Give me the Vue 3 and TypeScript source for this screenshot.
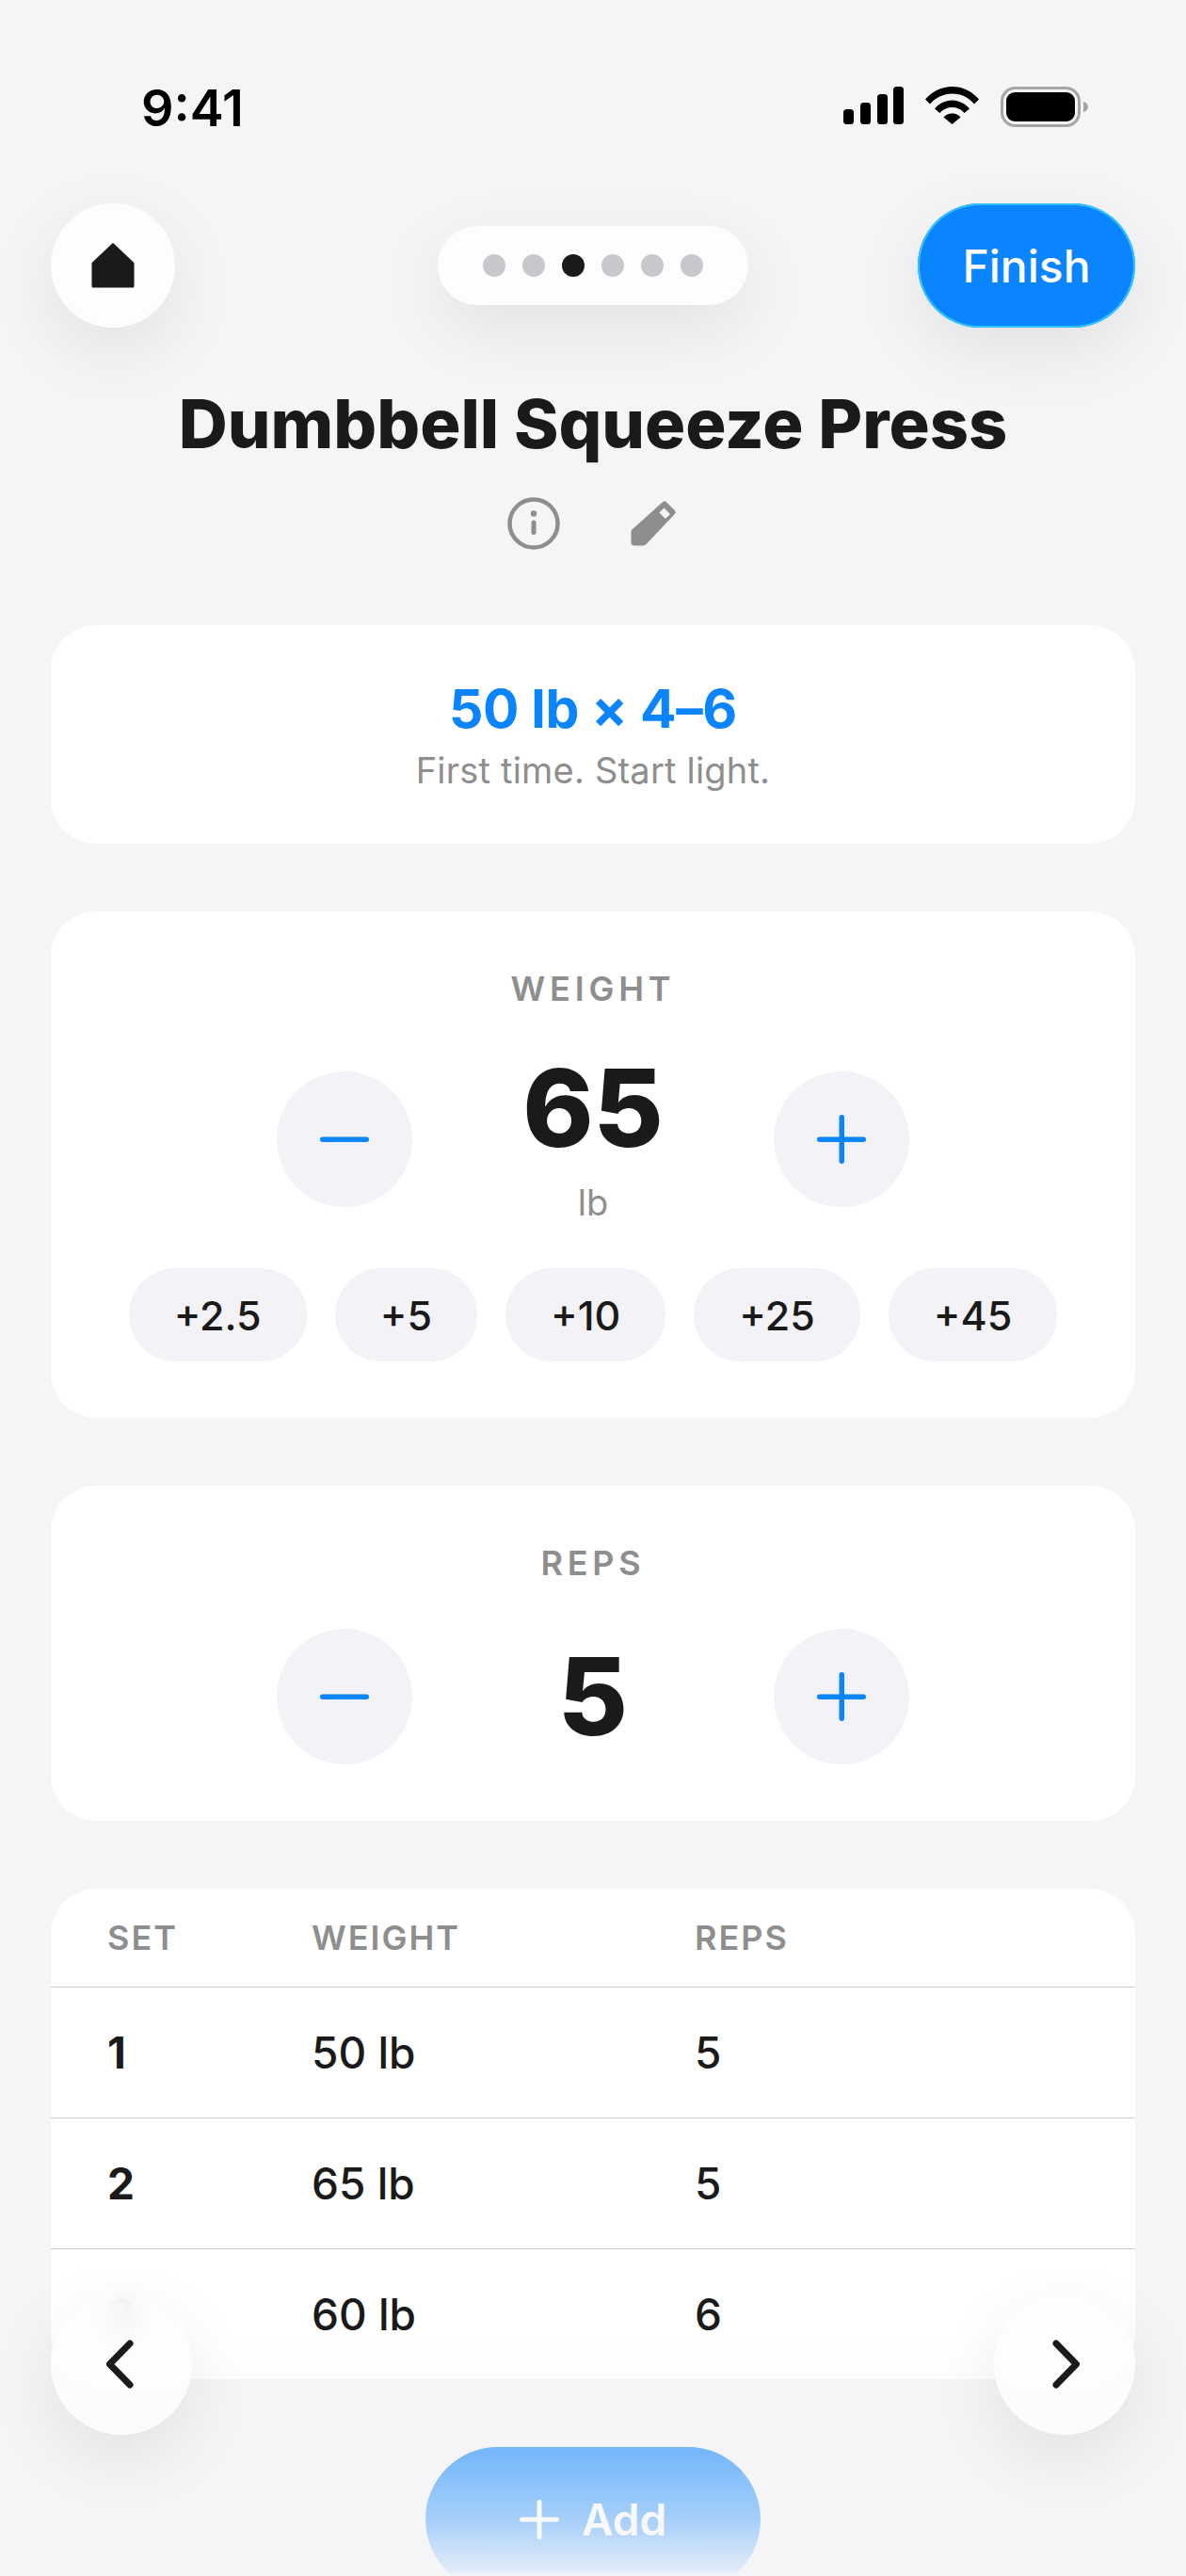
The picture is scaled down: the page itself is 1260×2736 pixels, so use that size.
<script setup lang="ts">
import { ref } from "vue";

const dots = [0, 1, 2, 3, 4, 5];
const activeDot = ref(2);
const increments = ["+2.5", "+5", "+10", "+25", "+45"];
const sets = [
  { set: 1, weight: "50 lb", reps: 5 },
  { set: 2, weight: "65 lb", reps: 5 },
  { set: 3, weight: "60 lb", reps: 6 },
];
</script>

<template>
  <div class="screen">
    <header class="status">
      <span class="clock">9:41</span>
      <div class="status-icons">
        <svg width="64" height="40" viewBox="0 0 64 40">
          <rect x="0" y="24" width="11" height="16" rx="3.5" />
          <rect x="18" y="17" width="11" height="23" rx="3.5" />
          <rect x="36" y="8" width="11" height="32" rx="3.5" />
          <rect x="53" y="0" width="11" height="40" rx="3.5" />
        </svg>
        <svg width="57" height="40" viewBox="0 0 57 40">
          <path d="M0 13.500C7.500 4.900 17.500 0 28.500 0S49.500 4.900 57 13.500L52 18.500C46 11.500 37.500 7.500 28.500 7.500S11 11.500 5 18.500Z" />
          <path d="M10 23.500C14.500 18 21 14.500 28.500 14.500S42.500 18 47 23.500L41.500 28C38.500 24.500 33.800 22 28.500 22S18.500 24.500 15.500 28Z" />
          <path d="M19.500 32.500C21.800 29.800 25 28.500 28.500 28.500S35.200 29.800 37.500 32.500L28.500 40Z" />
        </svg>
        <svg width="93" height="43" viewBox="0 0 93 43">
          <rect x="1.500" y="1.500" width="82" height="40" rx="14" fill="none" stroke="#a5a5a7" stroke-width="3" />
          <rect x="6" y="6" width="73" height="31" rx="9" />
          <path d="M88 16C91 16.500 93 19 93 21.500S91 26.500 88 27Z" fill="#a5a5a7" />
        </svg>
      </div>
    </header>

    <nav class="topbar">
      <button class="round home" aria-label="Home">
        <svg width="46" height="48" viewBox="0 0 46 48">
          <path d="M21.500 1.200a2 2 0 0 1 3 0L44.800 20.500a2 2 0 0 1 .7 1.500V46a1.500 1.500 0 0 1-1.500 1.500H2A1.500 1.500 0 0 1 .5 46V22a2 2 0 0 1 .7-1.500Z" fill="#1a1a1a" />
        </svg>
      </button>
      <div class="dots">
        <span v-for="d in dots" :key="d" class="dot" :class="{ active: d === activeDot }"></span>
      </div>
      <button class="finish">Finish</button>
    </nav>

    <h1 class="title">Dumbbell Squeeze Press</h1>
    <div class="title-actions">
      <svg width="56" height="56" viewBox="0 0 56 56" fill="none">
        <circle cx="28" cy="28" r="25.500" stroke="#8e8e8e" stroke-width="4.500" />
        <circle cx="28" cy="17.500" r="3.200" fill="#8e8e8e" />
        <rect x="25.500" y="24.500" width="5" height="15.500" rx="2.500" fill="#8e8e8e" />
      </svg>
      <svg width="48" height="48" viewBox="0 0 48 48">
        <path d="M34 1.200a3 3 0 0 1 4 0L46.800 10a3 3 0 0 1 0 4L16.500 46a4 4 0 0 1-3 1.500H4a3.500 3.500 0 0 1-3.500-3.500V33a4 4 0 0 1 1.200-2.800Z" fill="#8e8e8e" />
        <path d="M35.500 7.500 42 14 37 19 30.500 12.500Z" fill="#f5f5f7" />
      </svg>
    </div>

    <section class="card target">
      <div class="target-value">50 lb × 4–6</div>
      <div class="target-note">First time. Start light.</div>
    </section>

    <section class="card stepper-card weight">
      <div class="label">WEIGHT</div>
      <div class="stepper">
        <button class="step" aria-label="Decrease weight">
          <svg width="54" height="54" viewBox="0 0 54 54"><rect x="1" y="24.500" width="52" height="5.500" rx="2.700" /></svg>
        </button>
        <div class="value-wrap">
          <div class="value">65</div>
          <div class="unit">lb</div>
        </div>
        <button class="step" aria-label="Increase weight">
          <svg width="54" height="54" viewBox="0 0 54 54"><rect x="1" y="24.500" width="52" height="5.500" rx="2.700" /><rect x="24.500" y="1" width="5.500" height="52" rx="2.700" /></svg>
        </button>
      </div>
      <div class="chips">
        <button v-for="inc in increments" :key="inc" class="chip">{{ inc }}</button>
      </div>
    </section>

    <section class="card stepper-card reps">
      <div class="label">REPS</div>
      <div class="stepper">
        <button class="step" aria-label="Decrease reps">
          <svg width="54" height="54" viewBox="0 0 54 54"><rect x="1" y="24.500" width="52" height="5.500" rx="2.700" /></svg>
        </button>
        <div class="value-wrap">
          <div class="value">5</div>
        </div>
        <button class="step" aria-label="Increase reps">
          <svg width="54" height="54" viewBox="0 0 54 54"><rect x="1" y="24.500" width="52" height="5.500" rx="2.700" /><rect x="24.500" y="1" width="5.500" height="52" rx="2.700" /></svg>
        </button>
      </div>
    </section>

    <section class="card table">
      <div class="row head">
        <span>SET</span><span>WEIGHT</span><span>REPS</span>
      </div>
      <div v-for="s in sets" :key="s.set" class="row">
        <span class="set-no">{{ s.set }}</span><span>{{ s.weight }}</span><span>{{ s.reps }}</span>
      </div>
    </section>

    <button class="round nav prev" aria-label="Previous">
      <svg width="36" height="54" viewBox="0 0 36 54" fill="none"><path d="M27 5 5.500 27 27 49" /></svg>
    </button>
    <button class="round nav next" aria-label="Next">
      <svg width="36" height="54" viewBox="0 0 36 54" fill="none"><path d="M9 5l21.500 22L9 49" /></svg>
    </button>
    <button class="add">
      <svg width="42" height="42" viewBox="0 0 42 42"><rect x="0" y="18.500" width="42" height="5" rx="2.500" /><rect x="18.500" y="0" width="5" height="42" rx="2.500" /></svg>
      <span>Add</span>
    </button>
    <div class="fade-bottom"></div>
  </div>
</template>

<style>
html, body { margin: 0; background: #f5f5f7; }
</style>

<style scoped>
.screen {
  position: relative;
  width: 1260px;
  height: 2736px;
  overflow: hidden;
  background: #f5f5f7;
  font-family: Inter, "Noto Sans", sans-serif;
  color: #1a1a1a;
}

button { font-family: inherit; border: none; padding: 0; cursor: pointer; }

.status {
  position: relative;
  z-index: 2;
  height: 188px;
  box-sizing: border-box;
  padding: 84px 104px 0 150px;
  display: flex;
  justify-content: space-between;
  background: #f5f5f7;
}
.clock { font-size: 54px; font-weight: 600; line-height: 62px; color: #000; }
.status-icons { display: flex; gap: 23px; height: 44px; padding-top: 8px; align-items: flex-start; }
.status-icons svg { fill: #000; flex: none; }

.topbar {
  margin: 28px 54px 0;
  height: 132px;
  display: grid;
  grid-template-columns: 1fr auto 1fr;
  align-items: center;
}
.round {
  width: 132px;
  height: 132px;
  border-radius: 50%;
  background: #fdfdfe;
  box-shadow: 0 24px 72px rgba(0, 0, 0, 0.08);
  display: flex;
  align-items: center;
  justify-content: center;
}
.dots {
  display: flex;
  gap: 18px;
  padding: 30px 48px;
  border-radius: 42px;
  background: #fdfdfe;
  box-shadow: 0 24px 72px rgba(0, 0, 0, 0.08);
}
.dot { width: 24px; height: 24px; border-radius: 50%; background: #c7c7cc; }
.dot.active { background: #1a1a1a; }
.finish {
  justify-self: end;
  width: 231px;
  height: 132px;
  border-radius: 66px;
  background: #0a84ff;
  color: #fff;
  font-size: 48px;
  font-weight: 500;
  box-shadow: inset 0 0 0 2px #32c4fb, 0 24px 72px rgba(0, 0, 0, 0.08);
}

.title {
  margin: 60px 0 0;
  font-size: 72px;
  line-height: 84px;
  font-weight: 800;
  text-align: center;
}
.title-actions {
  margin-top: 34px;
  height: 60px;
  display: flex;
  justify-content: center;
  align-items: center;
  gap: 75px;
  padding-right: 3px;
}

.card {
  margin: 0 54px;
  background: #fff;
  border-radius: 48px;
}
.target {
  margin-top: 78px;
  height: 232px;
  box-sizing: border-box;
  padding-top: 54px;
  text-align: center;
}
.target-value { font-size: 57px; line-height: 70px; font-weight: 700; letter-spacing: -0.3px; color: #0a84ff; }
.target-note { margin-top: 8px; font-size: 38px; line-height: 44px; letter-spacing: 0.2px; color: #8e8e8e; }

.stepper-card { text-align: center; box-sizing: border-box; }
.weight { margin-top: 72px; height: 538px; padding-top: 60px; }
.reps { margin-top: 72px; height: 356px; padding-top: 60px; }
.label { font-size: 36px; line-height: 44px; font-weight: 600; letter-spacing: 4.8px; color: #8e8e8e; }

.stepper {
  margin-top: 48px;
  display: flex;
  justify-content: center;
  align-items: center;
}
.step {
  flex: none;
  width: 144px;
  height: 144px;
  border-radius: 50%;
  background: #f2f2f7;
  display: flex;
  align-items: center;
  justify-content: center;
}
.step svg { fill: #0a84ff; }
.value-wrap { width: 384px; }
.value { font-size: 114px; line-height: 114px; font-weight: 800; }
.unit { margin-top: 21px; font-size: 38px; line-height: 44px; color: #8e8e8e; }

.chips { margin-top: 48px; display: flex; justify-content: center; gap: 30px; }
.chip {
  height: 99px;
  padding: 0 48px;
  border-radius: 50px;
  background: #f2f2f7;
  color: #1a1a1a;
  font-size: 43px;
  font-weight: 500;
}

.table { margin-top: 72px; overflow: hidden; }
.row {
  display: grid;
  grid-template-columns: 217px 407px 1fr;
  align-items: center;
  height: 138px;
  padding: 0 60px;
  border-top: 1px solid #c7c7cc;
  font-size: 46px;
  font-weight: 500;
}
.head {
  height: 104px;
  border-top: none;
  font-size: 36px;
  font-weight: 600;
  letter-spacing: 2px;
  color: #8e8e8e;
}
.set-no { font-weight: 700; }

.nav {
  position: absolute;
  z-index: 3;
  top: 2436px;
  width: 150px;
  height: 150px;
  background: rgba(253, 253, 254, 0.9);
  backdrop-filter: blur(12px);
}
.nav svg path { stroke: #1a1a1a; stroke-width: 7; stroke-linecap: round; stroke-linejoin: round; }
.prev { left: 54px; }
.next { right: 54px; }

.add {
  position: absolute;
  z-index: 1;
  left: 452px;
  top: 2599px;
  width: 356px;
  height: 154px;
  border-radius: 77px;
  background: #0a84ff;
  color: #fff;
  font-size: 46px;
  font-weight: 600;
  display: flex;
  align-items: center;
  justify-content: center;
  gap: 24px;
}
.add svg { fill: #fff; }
.fade-bottom {
  position: absolute;
  z-index: 2;
  left: 0;
  right: 0;
  top: 2480px;
  height: 256px;
  background: linear-gradient(to bottom, rgba(245, 245, 247, 0) 0%, rgba(245, 245, 247, 0.44) 46%, rgba(245, 245, 247, 0.66) 76%, rgba(245, 245, 247, 0.92) 98%, rgba(245, 245, 247, 1) 100%);
  pointer-events: none;
}
</style>
